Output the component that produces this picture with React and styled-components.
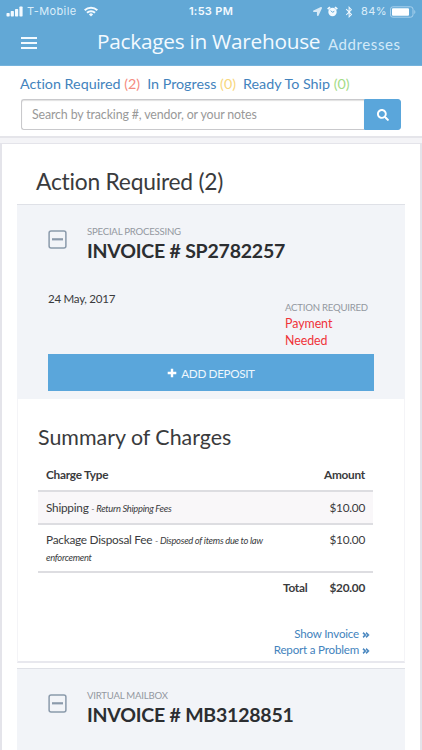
import styled, { createGlobalStyle } from 'styled-components';
import { FaSearch, FaAngleDoubleRight, FaLocationArrow, FaBluetoothB } from 'react-icons/fa';

const COLORS = {
  header: '#62a8d6',
  button: '#5aa6db',
  link: '#4383bd',
  text: '#3a3b3d',
  muted: '#9298a0',
  danger: '#f03238',
  panel: '#f2f4f8',
  rule: '#dddde1'
};

const GlobalStyle = createGlobalStyle`
  * {
    box-sizing: border-box;
  }

  body {
    margin: 0;
    background: #f4f4f7;
    color: ${COLORS.text};
    font-family: Lato, sans-serif;
    font-variant-ligatures: none;
    -webkit-font-smoothing: antialiased;
  }
`;

const Screen = styled.div`
  width: 422px;
  height: 750px;
  overflow: hidden;
`;

const Header = styled.header`
  height: 66px;
  background: ${COLORS.header};
  color: #f3faff;
  border-bottom: 1px solid #75b3dc;
`;

const StatusBar = styled.div`
  height: 23px;
  padding: 0 6px;
  display: grid;
  grid-template-columns: 1fr auto 1fr;
  align-items: center;
  font-family: Inter, sans-serif;
  font-size: 11px;
  line-height: 23px;
`;

const StatusGroup = styled.div`
  display: flex;
  align-items: center;
  justify-content: ${props => (props.$end ? 'flex-end' : 'flex-start')};
`;

const StatusIcons = styled.div`
  display: flex;
  align-items: center;
  gap: 5px;

  svg:first-child {
    opacity: 0.8;
  }
`;

const Carrier = styled.span`
  margin: 0 7px 0 4px;
  color: #dceefa;
  letter-spacing: 0.4px;
`;

const Clock = styled.span`
  font-weight: 600;
  letter-spacing: 0.3px;
`;

const Battery = styled.span`
  margin: 0 3px 0 6px;
  color: #dceefa;
  letter-spacing: 0.4px;
`;

const NavBar = styled.div`
  height: 40px;
  padding: 0 21px;
  display: flex;
  align-items: center;
  white-space: nowrap;
`;

const MenuButton = styled.button`
  width: 16px;
  height: 12px;
  margin: 0 60px 1px 0;
  padding: 0;
  border: 0;
  background: none;
  display: flex;
  flex-direction: column;
  justify-content: space-between;

  span {
    height: 2px;
    width: 16px;
    background: #f3faff;
  }
`;

const Title = styled.h1`
  margin: 0 8px 3px 0;
  font-family: 'Open Sans', sans-serif;
  font-weight: 400;
  font-size: 20.8px;
  letter-spacing: -0.26px;
  line-height: 37px;
  width: 223px;
`;

const NavLink = styled.span`
  padding-top: 2px;
  color: #d3eaf9;
  font-size: 15px;
  letter-spacing: 0.6px;
`;

const Toolbar = styled.div`
  height: 72px;
  padding: 8px 21px 0;
  background: #fff;
  border-bottom: 2px solid #e5e5ea;
`;

const Filters = styled.div`
  display: flex;
  gap: 7px;
  height: 25px;
  margin-left: -1px;
  color: ${COLORS.link};
  font-size: 14.3px;
  line-height: 20px;
  white-space: nowrap;
`;

const Count = styled.span`
  color: ${props => props.$color};
`;

const SearchBox = styled.div`
  display: flex;
  width: 380px;
  height: 31px;
`;

const SearchInput = styled.input`
  flex: 1;
  min-width: 0;
  padding: 0 10px;
  border: 1px solid #c9c9cc;
  border-right: 0;
  border-radius: 3px 0 0 3px;
  box-shadow: inset 0 1px 1px rgba(0, 0, 0, 0.12);
  font-family: Lato, sans-serif;
  font-size: 12.4px;
  letter-spacing: -0.14px;
  outline: 0;

  &::placeholder {
    color: #999;
    opacity: 1;
  }
`;

const SearchButton = styled.button`
  width: 37px;
  padding: 0;
  border: 1px solid #5aa6db;
  border-radius: 0 3px 3px 0;
  background: ${COLORS.button};
  color: #fff;
  display: flex;
  align-items: center;
  justify-content: center;
`;

const Content = styled.main`
  margin-top: 5px;
  height: 607px;
  padding: 0 15px;
  background: #fff;
  border: 1px solid #e4e4ea;
  border-width: 1px 2px 0;
`;

const SectionTitle = styled.h2`
  margin: 0;
  height: 60px;
  padding: 23px 0 0 19px;
  font-weight: 400;
  font-size: 22.8px;
  letter-spacing: -0.23px;
  line-height: 28px;
`;

const Invoice = styled.section`
  width: 388px;
  margin-bottom: 5px;
  border: 1px solid #f4f4f7;
  border-width: 0 1px;
  border-bottom: 2px solid #e8e8ee;
`;

const InvoiceHead = styled.div`
  height: 195px;
  margin: 0 -1px;
  padding: 20px 31px 0;
  background: ${COLORS.panel};
  border-top: 1px solid #dfe1e7;
`;

const InvoiceTop = styled.div`
  display: flex;
  height: 67px;
`;

const Collapse = styled.svg`
  margin: 5px 20px 0 0;
  flex: none;
`;

const Label = styled.div`
  color: ${COLORS.muted};
  font-size: 9.6px;
  letter-spacing: -0.22px;
  line-height: 13px;
  white-space: nowrap;
`;

const InvoiceNumber = styled.h3`
  margin: 1px 0 0;
  color: #2c2e31;
  font-weight: 700;
  font-size: 19.5px;
  letter-spacing: -0.22px;
  line-height: 24px;
  white-space: nowrap;
`;

const InvoiceMeta = styled.div`
  display: flex;
  justify-content: space-between;
  height: 62px;
`;

const InvoiceDate = styled.div`
  font-size: 11.6px;
  letter-spacing: -0.3px;
  line-height: 14px;
`;

const Status = styled.div`
  width: 89px;
  padding-top: 9px;
`;

const StatusText = styled.div`
  width: 60px;
  padding-top: 1px;
  color: ${COLORS.danger};
  font-size: 12.4px;
  letter-spacing: -0.05px;
  line-height: 17px;
`;

const DepositButton = styled.button`
  width: 326px;
  height: 37px;
  padding: 0;
  border: 0;
  background: ${COLORS.button};
  color: #eef7fd;
  display: flex;
  align-items: center;
  justify-content: center;
  gap: 4px;
  font-family: Lato, sans-serif;
  font-size: 11.7px;
  letter-spacing: -0.35px;
`;

const Charges = styled.div`
  height: 262px;
  padding: 24px 31px 0 20px;
`;

const ChargesTitle = styled.h2`
  margin: 0;
  height: 38px;
  font-weight: 400;
  font-size: 21.4px;
  line-height: 28px;
`;

const ChargeTable = styled.div`
  font-size: 11.8px;
  letter-spacing: -0.24px;
  line-height: 16px;
`;

const ChargeRow = styled.div`
  height: ${props => props.$height}px;
  padding: ${props => props.$top}px 8px 0;
  display: flex;
  justify-content: ${props => (props.$total ? 'flex-end' : 'space-between')};
  gap: ${props => (props.$total ? 22 : 0)}px;
  background: ${props => (props.$shaded ? '#f9f7f9' : 'transparent')};
  border-bottom: ${props => (props.$total ? 0 : 2)}px solid ${COLORS.rule};
  font-weight: ${props => (props.$bold ? 700 : 400)};
`;

const ChargeType = styled.div`
  width: 240px;
`;

const ChargeNote = styled.em`
  font-size: 9.4px;
  letter-spacing: -0.3px;
`;

const Links = styled.div`
  display: flex;
  flex-direction: column;
  align-items: flex-end;
  margin: 23px 3px 0 0;
  color: ${COLORS.link};
  font-size: 11.6px;
  letter-spacing: -0.2px;
  line-height: 16px;
`;

const LinkRow = styled.span`
  display: flex;
  align-items: center;
  gap: 3px;

  svg {
    margin-top: 1px;
    stroke: currentColor;
    stroke-width: 30;
  }
`;

const filters = [
  { label: 'Action Required', count: 2, color: '#f58b80' },
  { label: 'In Progress', count: 0, color: '#f8d77c' },
  { label: 'Ready To Ship', count: 0, color: '#a3dc86' }
];

const charges = [
  { type: 'Shipping', note: 'Return Shipping Fees', amount: '$10.00', height: 33, top: 8, shaded: true },
  { type: 'Package Disposal Fee', note: 'Disposed of items due to law enforcement', amount: '$10.00', height: 48, top: 7 }
];

const SignalIcon = () => (
  <svg width="17" height="11" viewBox="0 0 17 11" fill="#f3faff">
    <rect x="0.5" y="7" width="3.2" height="3.5" rx="0.7" />
    <rect x="4.7" y="5" width="3.2" height="5.5" rx="0.7" />
    <rect x="9" y="3" width="3.2" height="7.5" rx="0.7" />
    <rect x="13.4" y="0.5" width="3.2" height="10" rx="0.7" />
  </svg>
);

const WifiIcon = () => (
  <svg width="14" height="11" viewBox="0 0 14 11" fill="none" stroke="#f3faff" strokeWidth="2">
    <path d="M0.7 4.2a9 9 0 0 1 12.6 0" />
    <path d="M3 6.8a5.8 5.8 0 0 1 8 0" />
    <path d="M7 10.6L4.9 8.4a3 3 0 0 1 4.2 0z" fill="#f3faff" stroke="none" />
  </svg>
);

const AlarmIcon = () => (
  <svg width="11" height="11" viewBox="0 0 11 11">
    <path d="M0.7 3.2L3 1.1M10.3 3.2L8 1.1" stroke="#f3faff" strokeWidth="1.8" />
    <circle cx="5.5" cy="6" r="4.2" fill="#f3faff" />
    <path d="M3.8 4.6L5.5 6.3L7.3 5.3" fill="none" stroke={COLORS.header} strokeWidth="1" />
  </svg>
);

const BatteryIcon = () => (
  <svg width="26" height="12" viewBox="0 0 26 12">
    <rect x="0.5" y="0.8" width="22.5" height="10.4" rx="2.4" fill="none" stroke="#a8d1ed" />
    <rect x="2" y="2.2" width="17" height="7.6" rx="1" fill="#fff" />
    <path d="M24.3 4v4c1.4-.6 1.4-3.4 0-4z" fill="#a8d1ed" />
  </svg>
);

const PlusIcon = () => (
  <svg width="10" height="10" viewBox="0 0 10 10" stroke="#fff" strokeWidth="2.4">
    <path d="M5 0.7v8.6M0.7 5h8.6" />
  </svg>
);

const CollapseIcon = () => (
  <Collapse width="19" height="19" viewBox="0 0 19 19" fill="none" stroke="#8b9aab">
    <rect x="1.1" y="1.1" width="16.8" height="16.8" rx="2" strokeWidth="1.5" />
    <path d="M4 9.3h11" strokeWidth="2.2" />
  </Collapse>
);

const InvoiceHeading = ({ label, number }) => (
  <InvoiceTop>
    <CollapseIcon />
    <div>
      <Label>{label}</Label>
      <InvoiceNumber>INVOICE # {number}</InvoiceNumber>
    </div>
  </InvoiceTop>
);

const App = () => (
  <Screen>
    <GlobalStyle />
    <Header>
      <StatusBar>
        <StatusGroup>
          <SignalIcon />
          <Carrier>T-Mobile</Carrier>
          <WifiIcon />
        </StatusGroup>
        <Clock>1:53 PM</Clock>
        <StatusGroup $end>
          <StatusIcons>
            <FaLocationArrow size={9} />
            <AlarmIcon />
            <FaBluetoothB size={12} />
          </StatusIcons>
          <Battery>84%</Battery>
          <BatteryIcon />
        </StatusGroup>
      </StatusBar>
      <NavBar>
        <MenuButton aria-label="Menu">
          <span />
          <span />
          <span />
        </MenuButton>
        <Title>Packages in Warehouse</Title>
        <NavLink>Addresses</NavLink>
      </NavBar>
    </Header>
    <Toolbar>
      <Filters>
        {filters.map((filter) => (
          <span key={filter.label}>
            {filter.label} <Count $color={filter.color}>({filter.count})</Count>
          </span>
        ))}
      </Filters>
      <SearchBox>
        <SearchInput placeholder="Search by tracking #, vendor, or your notes" />
        <SearchButton aria-label="Search">
          <FaSearch size={12} />
        </SearchButton>
      </SearchBox>
    </Toolbar>
    <Content>
      <SectionTitle>Action Required (2)</SectionTitle>
      <Invoice>
        <InvoiceHead>
          <InvoiceHeading label="SPECIAL PROCESSING" number="SP2782257" />
          <InvoiceMeta>
            <InvoiceDate>24 May, 2017</InvoiceDate>
            <Status>
              <Label>ACTION REQUIRED</Label>
              <StatusText>Payment Needed</StatusText>
            </Status>
          </InvoiceMeta>
          <DepositButton>
            <PlusIcon /> ADD DEPOSIT
          </DepositButton>
        </InvoiceHead>
        <Charges>
          <ChargesTitle>Summary of Charges</ChargesTitle>
          <ChargeTable>
            <ChargeRow $height={31} $top={6} $bold>
              <span>Charge Type</span>
              <span>Amount</span>
            </ChargeRow>
            {charges.map((charge) => (
              <ChargeRow key={charge.type} $height={charge.height} $top={charge.top} $shaded={charge.shaded}>
                <ChargeType>
                  {charge.type} <ChargeNote>- {charge.note}</ChargeNote>
                </ChargeType>
                <span>{charge.amount}</span>
              </ChargeRow>
            ))}
            <ChargeRow $height={30} $top={7} $bold $total>
              <span>Total</span>
              <span>$20.00</span>
            </ChargeRow>
          </ChargeTable>
          <Links>
            <LinkRow>Show Invoice <FaAngleDoubleRight size={8} /></LinkRow>
            <LinkRow>Report a Problem <FaAngleDoubleRight size={8} /></LinkRow>
          </Links>
        </Charges>
      </Invoice>
      <Invoice>
        <InvoiceHead>
          <InvoiceHeading label="VIRTUAL MAILBOX" number="MB3128851" />
        </InvoiceHead>
      </Invoice>
    </Content>
  </Screen>
);

export default App;
